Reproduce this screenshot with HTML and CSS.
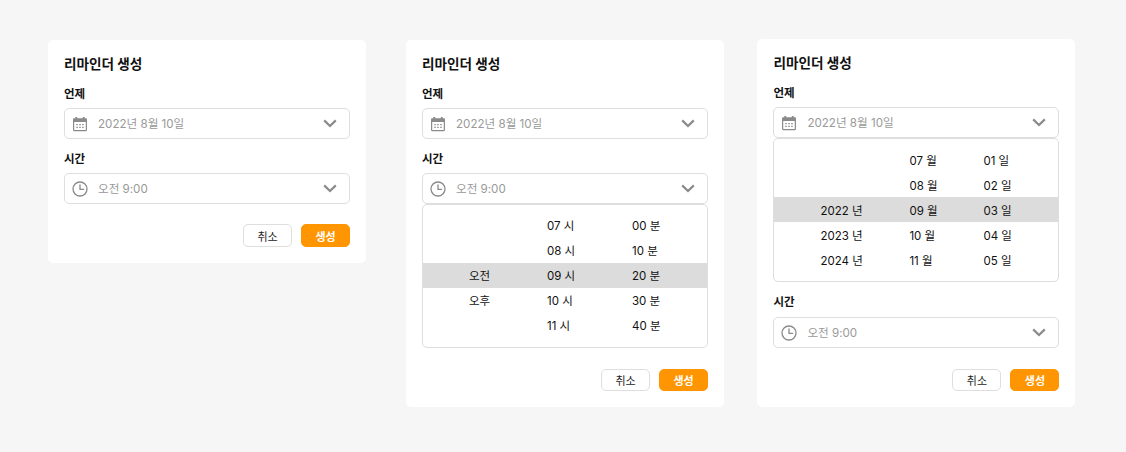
FILE: index.html
```html
<!DOCTYPE html>
<html lang="ko">
<head>
<meta charset="utf-8">
<title>리마인더 생성</title>
<link rel="stylesheet" href="styles.css">
</head>
<body>
<main class="board">
  <section class="card card-first">
    <h2 class="title">리마인더 생성</h2>
    <div class="label">언제</div>
    <div class="field">
      <svg class="ficon" viewBox="-0.6 0 17.2 16.2"><path class="fill" d="M3 0.5h2v1.5h6V0.5h2V2h1.2c.7 0 1.3.6 1.3 1.3v11.2c0 .7-.6 1.3-1.3 1.3H1.8c-.7 0-1.3-.6-1.3-1.3V3.3C.5 2.6 1.1 2 1.8 2H3zM1.8 6v8.5h12.4V6z"/><path class="fill" d="M4 8h1.6v1.4H4zM7.2 8h1.6v1.4H7.2zM10.4 8H12v1.4h-1.6zM4 11h1.6v1.4H4zM7.2 11h1.6v1.4H7.2zM10.4 11H12v1.4h-1.6z"/></svg>
      <span class="value">2022년 8월 10일</span>
      <svg class="chev" viewBox="0 0 14 9"><path d="M1.2 1.4 7 7l5.8-5.6"/></svg>
    </div>
    <div class="label label-next">시간</div>
    <div class="field">
      <svg class="ficon" viewBox="0 0 16 16"><circle class="line" cx="8" cy="8" r="7"/><path class="line" d="M8 3.8V8.4h3.6"/></svg>
      <span class="value">오전 9:00</span>
      <svg class="chev" viewBox="0 0 14 9"><path d="M1.2 1.4 7 7l5.8-5.6"/></svg>
    </div>
    <div class="actions">
      <button class="btn btn-cancel">취소</button>
      <button class="btn btn-ok">생성</button>
    </div>
  </section>

  <section class="card">
    <h2 class="title">리마인더 생성</h2>
    <div class="label">언제</div>
    <div class="field">
      <svg class="ficon" viewBox="-0.6 0 17.2 16.2"><path class="fill" d="M3 0.5h2v1.5h6V0.5h2V2h1.2c.7 0 1.3.6 1.3 1.3v11.2c0 .7-.6 1.3-1.3 1.3H1.8c-.7 0-1.3-.6-1.3-1.3V3.3C.5 2.6 1.1 2 1.8 2H3zM1.8 6v8.5h12.4V6z"/><path class="fill" d="M4 8h1.6v1.4H4zM7.2 8h1.6v1.4H7.2zM10.4 8H12v1.4h-1.6zM4 11h1.6v1.4H4zM7.2 11h1.6v1.4H7.2zM10.4 11H12v1.4h-1.6z"/></svg>
      <span class="value">2022년 8월 10일</span>
      <svg class="chev" viewBox="0 0 14 9"><path d="M1.2 1.4 7 7l5.8-5.6"/></svg>
    </div>
    <div class="label label-next">시간</div>
    <div class="field">
      <svg class="ficon" viewBox="0 0 16 16"><circle class="line" cx="8" cy="8" r="7"/><path class="line" d="M8 3.8V8.4h3.6"/></svg>
      <span class="value">오전 9:00</span>
      <svg class="chev" viewBox="0 0 14 9"><path d="M1.2 1.4 7 7l5.8-5.6"/></svg>
    </div>
    <div class="panel panel-time">
      <div class="row"><span></span><span>07 시</span><span>00 분</span></div>
      <div class="row"><span></span><span>08 시</span><span>10 분</span></div>
      <div class="row row-on"><span>오전</span><span>09 시</span><span>20 분</span></div>
      <div class="row"><span>오후</span><span>10 시</span><span>30 분</span></div>
      <div class="row"><span></span><span>11 시</span><span>40 분</span></div>
    </div>
    <div class="actions">
      <button class="btn btn-cancel">취소</button>
      <button class="btn btn-ok">생성</button>
    </div>
  </section>

  <section class="card card-last">
    <h2 class="title">리마인더 생성</h2>
    <div class="label">언제</div>
    <div class="field">
      <svg class="ficon" viewBox="-0.6 0 17.2 16.2"><path class="fill" d="M3 0.5h2v1.5h6V0.5h2V2h1.2c.7 0 1.3.6 1.3 1.3v11.2c0 .7-.6 1.3-1.3 1.3H1.8c-.7 0-1.3-.6-1.3-1.3V3.3C.5 2.6 1.1 2 1.8 2H3zM1.8 6v8.5h12.4V6z"/><path class="fill" d="M4 8h1.6v1.4H4zM7.2 8h1.6v1.4H7.2zM10.4 8H12v1.4h-1.6zM4 11h1.6v1.4H4zM7.2 11h1.6v1.4H7.2zM10.4 11H12v1.4h-1.6z"/></svg>
      <span class="value">2022년 8월 10일</span>
      <svg class="chev" viewBox="0 0 14 9"><path d="M1.2 1.4 7 7l5.8-5.6"/></svg>
    </div>
    <div class="panel panel-date">
      <div class="row"><span></span><span>07 월</span><span>01 일</span></div>
      <div class="row"><span></span><span>08 월</span><span>02 일</span></div>
      <div class="row row-on"><span>2022 년</span><span>09 월</span><span>03 일</span></div>
      <div class="row"><span>2023 년</span><span>10 월</span><span>04 일</span></div>
      <div class="row"><span>2024 년</span><span>11 월</span><span>05 일</span></div>
    </div>
    <div class="label label-after">시간</div>
    <div class="field">
      <svg class="ficon" viewBox="0 0 16 16"><circle class="line" cx="8" cy="8" r="7"/><path class="line" d="M8 3.8V8.4h3.6"/></svg>
      <span class="value">오전 9:00</span>
      <svg class="chev" viewBox="0 0 14 9"><path d="M1.2 1.4 7 7l5.8-5.6"/></svg>
    </div>
    <div class="actions">
      <button class="btn btn-cancel">취소</button>
      <button class="btn btn-ok">생성</button>
    </div>
  </section>
</main>
</body>
</html>
```
FILE: styles.css
```css
* { box-sizing: border-box; }
html, body { margin: 0; height: 100%; }
body {
  background: #f6f6f6;
  font-family: Inter, "Noto Sans CJK KR", sans-serif;
  color: #111;
  overflow: hidden;
}
.board {
  display: flex;
  align-items: flex-start;
  gap: 40px;
  padding: 40px 0 0 48px;
}
.card {
  width: 318px;
  background: #fff;
  border-radius: 5px;
  padding: 15px 16px 16px;
}
.card-last {
  margin: -1px 0 0 -6.6px;
}
.title {
  margin: 0;
  font-size: 13.6px;
  font-weight: 700;
  line-height: 18px;
  color: #111;
}
.label {
  margin-top: 13px;
  margin-bottom: 6px;
  font-size: 11.5px;
  font-weight: 700;
  line-height: 16px;
}
.label-next { margin-top: 12px; }
.label-after { margin-top: 12px; margin-bottom: 7px; }
.field {
  display: flex;
  align-items: center;
  height: 31px;
  padding: 0 12px 0 7px;
  border: 1px solid #dedede;
  border-radius: 5px;
  background: #fff;
}
.ficon { width: 16px; height: 16px; flex: none; }
.fill { fill: #8a8a8a; fill-rule: evenodd; }
.line { fill: none; stroke: #8a8a8a; stroke-width: 1.3; stroke-linecap: round; stroke-linejoin: round; }
.value {
  flex: 1;
  margin-left: 10px;
  padding-bottom: 2px;
  font-size: 11.6px;
  color: #999;
}
.chev { width: 14px; height: 9px; flex: none; }
.chev path { fill: none; stroke: #8a8a8a; stroke-width: 2.2; }
.panel {
  height: 144px;
  padding: 8px 0 10px;
  border: 1px solid #dedede;
  border-radius: 5px;
  background: #fff;
  font-size: 11.5px;
  color: #111;
}
.row {
  display: grid;
  align-items: center;
  height: 25px;
  padding-left: 46px;
}
.panel-time .row { grid-template-columns: 78px 85px 1fr; padding-bottom: 1px; }
.panel-date .row { grid-template-columns: 89px 74px 1fr; }
.row-on { background: #dcdcdc; }
.actions {
  display: flex;
  justify-content: flex-end;
  gap: 9px;
  margin-top: 21px;
}
.card-first .actions { margin-top: 20px; }
.btn {
  width: 49px;
  height: 22px;
  padding: 0;
  border-radius: 5px;
  font: inherit;
  font-size: 11px;
}
.card-first .btn { height: 23px; }
.btn-cancel { background: #fff; border: 1px solid #dedede; color: #222; }
.btn-ok { background: #ff9500; border: 1px solid #ff9500; color: #fff; font-weight: 700; }
```
